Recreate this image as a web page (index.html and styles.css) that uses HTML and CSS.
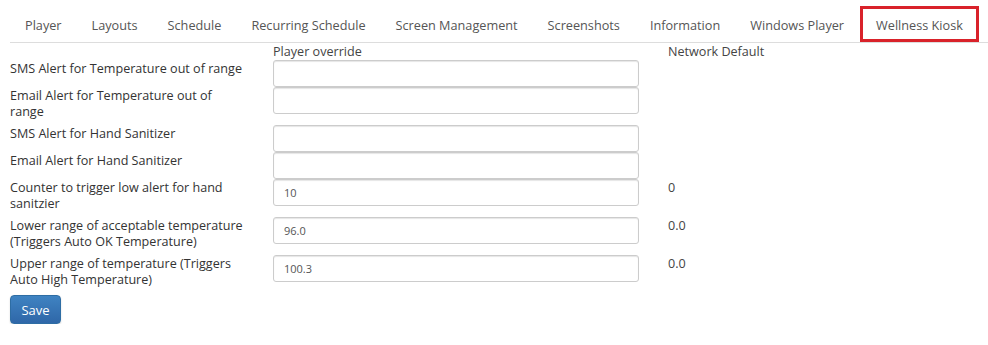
FILE: index.html
```html
<!DOCTYPE html>
<html lang="en">
<head>
  <meta charset="UTF-8" />
  <title>Wellness Kiosk Settings</title>
  <link rel="stylesheet" href="styles.css">
</head>
<body>
  <ul class="tabs">
    <li>Player</li>
    <li>Layouts</li>
    <li>Schedule</li>
    <li>Recurring Schedule</li>
    <li>Screen Management</li>
    <li>Screenshots</li>
    <li>Information</li>
    <li>Windows Player</li>
    <li class="active">Wellness Kiosk</li>
  </ul>

  <table class="settings">
    <thead>
      <tr>
        <th class="col-label"></th>
        <th class="col-input">Player override</th>
        <th class="col-default">Network Default</th>
      </tr>
    </thead>
    <tbody>
      <tr>
        <td class="label">SMS Alert for Temperature out of range</td>
        <td><input type="text" value=""></td>
        <td class="default"></td>
      </tr>
      <tr>
        <td class="label">Email Alert for Temperature out of range</td>
        <td><input type="text" value=""></td>
        <td class="default"></td>
      </tr>
      <tr>
        <td class="label">SMS Alert for Hand Sanitizer</td>
        <td><input type="text" value=""></td>
        <td class="default"></td>
      </tr>
      <tr>
        <td class="label">Email Alert for Hand Sanitizer</td>
        <td><input type="text" value=""></td>
        <td class="default"></td>
      </tr>
      <tr>
        <td class="label">Counter to trigger low alert for hand sanitzier</td>
        <td><input type="text" value="10"></td>
        <td class="default">0</td>
      </tr>
      <tr>
        <td class="label">Lower range of acceptable temperature (Triggers Auto OK Temperature)</td>
        <td><input type="text" value="96.0"></td>
        <td class="default">0.0</td>
      </tr>
      <tr>
        <td class="label">Upper range of temperature (Triggers Auto High Temperature)</td>
        <td><input type="text" value="100.3"></td>
        <td class="default">0.0</td>
      </tr>
    </tbody>
  </table>

  <button class="btn-save">Save</button>
</body>
</html>
```

FILE: styles.css
```css
body {
  font-family: 'Open Sans', 'Liberation Sans', Arial, sans-serif;
  margin: 0;
  padding: 0 0 0 10px;
  background-color: #fff;
  color: #333;
  font-size: 12.6px;
}

.tabs {
  display: flex;
  list-style: none;
  margin: 0;
  padding: 6px 0 0 0;
  border-bottom: 1px solid #ddd;
}

.tabs li {
  flex-shrink: 0;
  white-space: nowrap;
  padding: 2px 15px 0;
  height: 36px;
  line-height: 34px;
  font-size: 12.7px;
  color: #555;
  box-sizing: border-box;
}

.tabs li.active {
  margin-left: 1px;
  padding: 2px 13px 0;
  border: 3px solid #d9222a;
  line-height: 28px;
}

.settings {
  border-collapse: collapse;
  table-layout: fixed;
  width: 800px;
}

.settings th {
  font-weight: normal;
  text-align: left;
  padding: 1px 0 0 0;
  height: 16px;
  line-height: 16px;
  vertical-align: top;
  white-space: nowrap;
  color: #444;
}

.col-label {
  width: 263px;
}

.col-input {
  width: 395px;
}

.settings td {
  padding: 0;
  vertical-align: top;
}

.settings td.label {
  padding: 1px 30px 5px 0;
  line-height: 16px;
  color: #333;
}

.settings td.default {
  padding-top: 1px;
  line-height: 16px;
  color: #444;
}

.settings input {
  display: block;
  width: 366px;
  height: 27px;
  box-sizing: border-box;
  margin: 0;
  padding: 0 10px;
  font-family: inherit;
  font-size: 11px;
  color: #555;
  border: 1px solid #ccc;
  border-radius: 3px;
  box-shadow: inset 0 1px 1px rgba(0, 0, 0, 0.1);
}

.btn-save {
  margin-top: 2px;
  width: 51px;
  height: 29px;
  font-family: inherit;
  font-size: 13px;
  color: #fff;
  border: 1px solid #2e6da4;
  border-radius: 4px;
  background-image: linear-gradient(#3f83c2, #2f67a8);
  box-shadow: 0 1px 2px rgba(0, 0, 0, 0.15);
  cursor: pointer;
}
```
